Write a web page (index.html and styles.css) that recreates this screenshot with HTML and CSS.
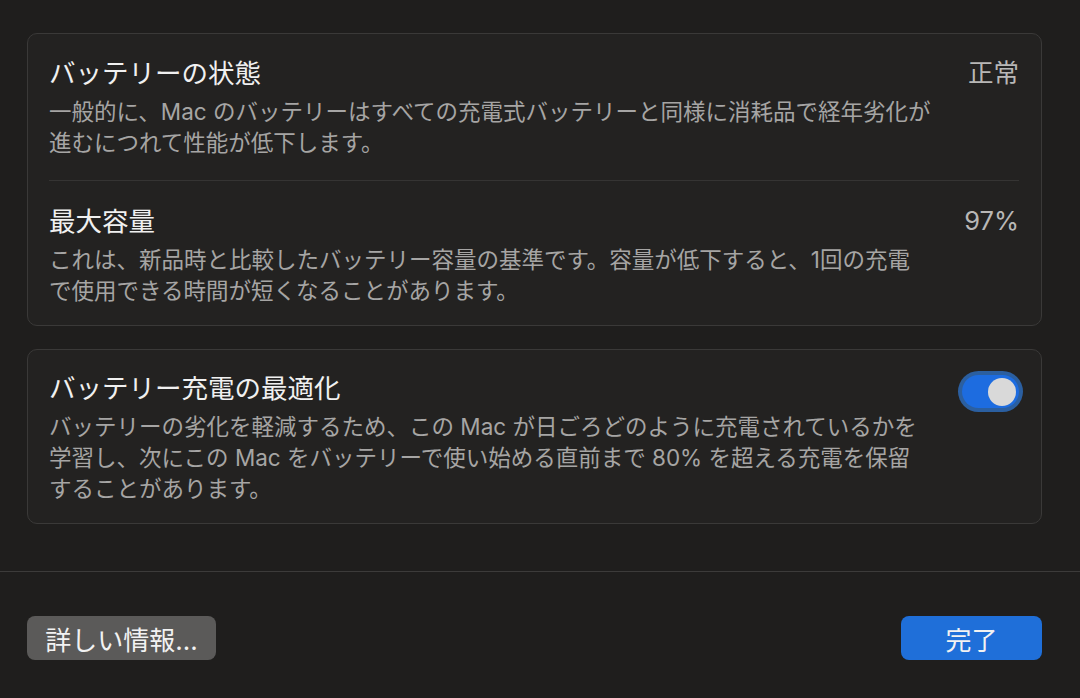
FILE: index.html
```html
<!DOCTYPE html>
<html lang="ja">
<head>
<meta charset="utf-8">
<title>バッテリー</title>
<link rel="stylesheet" href="styles.css">
</head>
<body>
<main class="page">
  <section class="card">
    <div class="row row-first">
      <div class="text">
        <div class="title">バッテリーの状態</div>
        <div class="desc">一般的に、Mac のバッテリーはすべての充電式バッテリーと同様に消耗品で経年劣化が<br>進むにつれて性能が低下します。</div>
      </div>
      <div class="value">正常</div>
    </div>
    <div class="sep"></div>
    <div class="row row-second">
      <div class="text">
        <div class="title">最大容量</div>
        <div class="desc">これは、新品時と比較したバッテリー容量の基準です。容量が低下すると、1回の充電<br>で使用できる時間が短くなることがあります。</div>
      </div>
      <div class="value">97%</div>
    </div>
  </section>
  <section class="card card-opt">
    <div class="row row-opt">
      <div class="text">
        <div class="title">バッテリー充電の最適化</div>
        <div class="desc">バッテリーの劣化を軽減するため、この Mac が日ごろどのように充電されているかを<br>学習し、次にこの Mac をバッテリーで使い始める直前まで 80% を超える充電を保留<br>することがあります。</div>
      </div>
      <div class="toggle"><div class="knob"></div></div>
    </div>
  </section>
</main>
<div class="divider"></div>
<footer class="footer">
  <button class="btn btn-gray">詳しい情報...</button>
  <button class="btn btn-blue">完了</button>
</footer>
</body>
</html>
```
FILE: styles.css
```css
* { box-sizing: border-box; }
html, body {
  margin: 0;
  padding: 0;
  background: #1f1e1d;
  height: 100%;
  overflow: hidden;
}
body {
  font-family: "Inter", "Noto Sans CJK JP", sans-serif;
  color: #e6e6e6;
}
.page {
  padding: 33px 38px 0 27px;
  display: flex;
  flex-direction: column;
  gap: 23px;
}
.card {
  background: #232221;
  border: 1px solid #3a3938;
  border-radius: 10px;
  padding: 0 22px 0 21px;
}
.row {
  display: flex;
  justify-content: space-between;
  align-items: flex-start;
}
.row-first { padding: 21px 0 22px; }
.row-second { padding: 22px 0 19px; }
.row-opt { padding: 20px 0 19px; }
.title {
  font-size: 26.5px;
  line-height: 36px;
  font-weight: 400;
  color: #f0f0f0;
}
.desc {
  margin-top: 5px;
  font-size: 22.5px;
  line-height: 31px;
  color: #a6a5a4;
  white-space: nowrap;
}
.desc .sp { letter-spacing: -2px; }
.value {
  font-size: 25.5px;
  line-height: 36px;
  color: #b8b7b6;
}
.sep {
  height: 1px;
  background: #353433;
}
.toggle {
  margin-top: 5px;
  width: 57px;
  height: 33px;
  border-radius: 17px;
  background: #1d6ce0;
  box-shadow: 0 0 0 4px #2b5fa0;
  display: flex;
  align-items: center;
  justify-content: flex-end;
  padding-right: 3px;
}
.knob {
  width: 28px;
  height: 28px;
  border-radius: 50%;
  background: #d9d9d9;
}
.divider {
  margin-top: 47px;
  height: 1px;
  background: #3c3b3a;
}
.footer {
  padding: 44px 38px 0 27px;
  display: flex;
  justify-content: space-between;
}
.btn {
  height: 44px;
  border: none;
  border-radius: 8px;
  font-family: "Inter", "Noto Sans CJK JP", sans-serif;
  font-size: 26px;
  color: #f2f2f2;
  padding: 0;
}
.btn-gray {
  width: 189px;
  background: #5b5a59;
}
.btn-blue {
  width: 141px;
  background: #1f6fd9;
}
```
